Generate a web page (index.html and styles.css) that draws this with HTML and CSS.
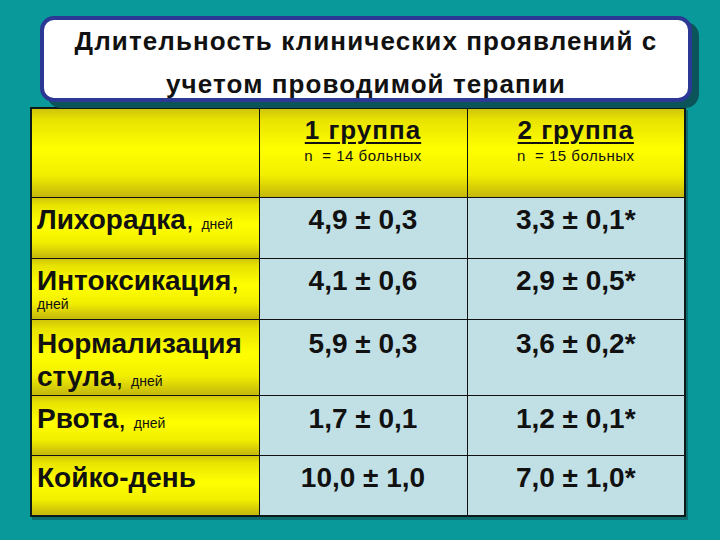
FILE: index.html
```html
<!DOCTYPE html>
<html lang="ru">
<head>
<meta charset="utf-8">
<link rel="stylesheet" href="styles.css">
</head>
<body>
<div class="slide">
  <div class="title">
    <div class="title-line">Длительность клинических проявлений с</div>
    <div class="title-line">учетом проводимой терапии</div>
  </div>
  <table class="data">
    <colgroup>
      <col class="c1"><col class="c2"><col class="c3">
    </colgroup>
    <tr class="r-head">
      <td class="y"></td>
      <td class="y head"><div class="grp">1 группа</div><div class="n">n&nbsp; = 14 больных</div></td>
      <td class="y head"><div class="grp">2 группа</div><div class="n">n&nbsp; = 15 больных</div></td>
    </tr>
    <tr class="r1">
      <td class="y lab"><b>Лихорадка</b><span class="cm">,&nbsp;</span><span class="u">дней</span></td>
      <td class="b val">4,9 ± 0,3</td>
      <td class="b val">3,3 ± 0,1*</td>
    </tr>
    <tr class="r2">
      <td class="y lab"><b>Интоксикация</b><span class="cm">,</span><br><span class="u">дней</span></td>
      <td class="b val">4,1 ± 0,6</td>
      <td class="b val">2,9 ± 0,5*</td>
    </tr>
    <tr class="r3">
      <td class="y lab t3"><b>Нормализация</b><br><b>стула</b><span class="cm">,&nbsp;</span><span class="u">дней</span></td>
      <td class="b val t3">5,9 ± 0,3</td>
      <td class="b val t3">3,6 ± 0,2*</td>
    </tr>
    <tr class="r4">
      <td class="y lab t4"><b>Рвота</b><span class="cm">,&nbsp;</span><span class="u">дней</span></td>
      <td class="b val t4">1,7 ± 0,1</td>
      <td class="b val t4">1,2 ± 0,1*</td>
    </tr>
    <tr class="r5">
      <td class="y lab"><b>Койко-день</b></td>
      <td class="b val">10,0 ± 1,0</td>
      <td class="b val">7,0 ± 1,0*</td>
    </tr>
  </table>
</div>
</body>
</html>
```
FILE: styles.css
```css
html, body {
  margin: 0;
  padding: 0;
  background: #0a999b;
}
.slide {
  width: 720px;
  height: 540px;
  overflow: hidden;
  background: #0a999b;
  padding-top: 16px;
  box-sizing: border-box;
  font-family: "Liberation Sans", Arial, sans-serif;
  color: #111;
}
.title {
  margin-left: 40px;
  width: 652px;
  height: 86px;
  box-sizing: border-box;
  border: 4px solid #2c3994;
  border-radius: 14px;
  background: #fff;
  box-shadow: 7px 6px 0 #0b5459;
  text-align: center;
  font-weight: bold;
  font-size: 26px;
  letter-spacing: 1.1px;
  line-height: 43px;
  position: relative;
  z-index: 1;
}
.data {
  margin-top: 5px;
  margin-left: 30px;
  width: 654px;
  border-collapse: collapse;
  table-layout: fixed;
  border: 2px solid #0d1a1a;
  box-shadow: 2px 3px 0 #0c6e70;
}
.c1 { width: 228px; }
.c2 { width: 208px; }
.c3 { width: 218px; }
.data td {
  border: 1.5px solid #111;
  padding: 0;
  vertical-align: top;
}
.y {
  background: linear-gradient(to bottom, #cfc40c 0%, #e8e200 12%, #ffff00 45%, #f2ee00 75%, #c4b80c 100%);
}
.b {
  background: #c1e0e5;
}
.r-head { height: 89px; }
.r1 { height: 61px; }
.r2 { height: 61px; }
.r3 { height: 76px; }
.r4 { height: 60px; }
.r5 { height: 61px; }
.data td.head {
  text-align: center;
  padding-top: 7px;
}
.grp {
  font-weight: bold;
  font-size: 26px;
  letter-spacing: 1px;
  line-height: 28px;
  text-decoration: underline;
  text-decoration-thickness: 2px;
  text-underline-offset: 3px;
}
.n {
  font-size: 15px;
  letter-spacing: 0.5px;
  line-height: 20px;
  margin-top: 2px;
}
.data td.lab {
  padding: 5px 2px 0 5px;
  font-size: 14px;
  line-height: 15px;
}
.lab b {
  font-size: 28px;
  line-height: 33px;
}
.cm {
  font-size: 28px;
  line-height: 33px;
}
.u {
  font-size: 14px;
}
.data td.val {
  text-align: center;
  font-weight: bold;
  font-size: 28px;
  line-height: 33px;
  padding-top: 5px;
}
.data td.t3 {
  padding-top: 7px;
}
.data td.t4 {
  padding-top: 6px;
}
```
